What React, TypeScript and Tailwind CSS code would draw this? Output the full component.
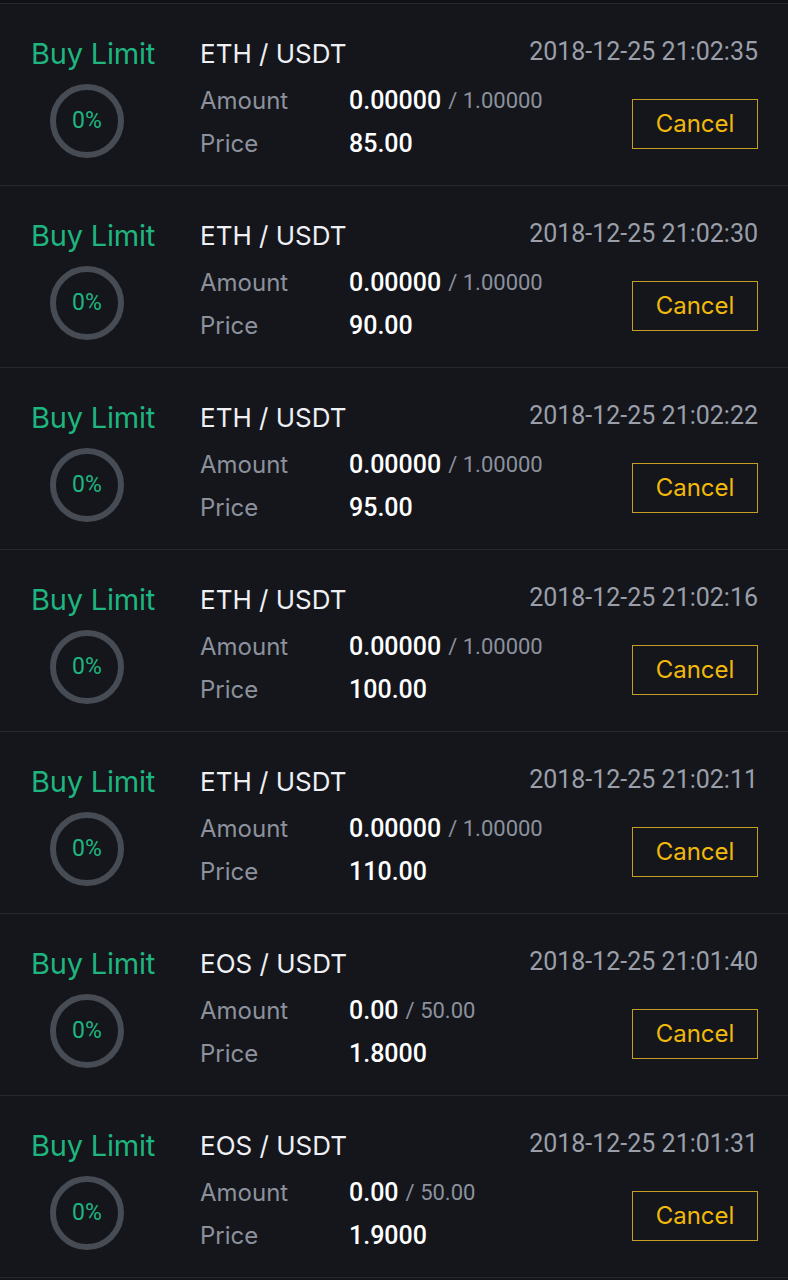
import React from "react";

type Order = {
  pair: string;
  time: string;
  filled: string;
  total: string;
  price: string;
};

const orders: Order[] = [
  { pair: "ETH / USDT", time: "2018-12-25 21:02:35", filled: "0.00000", total: "1.00000", price: "85.00" },
  { pair: "ETH / USDT", time: "2018-12-25 21:02:30", filled: "0.00000", total: "1.00000", price: "90.00" },
  { pair: "ETH / USDT", time: "2018-12-25 21:02:22", filled: "0.00000", total: "1.00000", price: "95.00" },
  { pair: "ETH / USDT", time: "2018-12-25 21:02:16", filled: "0.00000", total: "1.00000", price: "100.00" },
  { pair: "ETH / USDT", time: "2018-12-25 21:02:11", filled: "0.00000", total: "1.00000", price: "110.00" },
  { pair: "EOS / USDT", time: "2018-12-25 21:01:40", filled: "0.00", total: "50.00", price: "1.8000" },
  { pair: "EOS / USDT", time: "2018-12-25 21:01:31", filled: "0.00", total: "50.00", price: "1.9000" },
];

const Ring = () => (
  <div className="relative w-[74px] h-[74px] ml-[19px] mt-[14px]">
    <svg width="74" height="74" viewBox="0 0 74 74">
      <circle cx="37" cy="37" r="34" fill="none" stroke="#474b53" strokeWidth="6" />
    </svg>
    <span className="absolute inset-0 flex items-center justify-center text-[23px] text-[#1fb57f] font-['Roboto',sans-serif]">
      0%
    </span>
  </div>
);

const Row = ({ o }: { o: Order }) => (
  <div className="flex h-[182px] border-b border-[#262931] whitespace-nowrap">
    <div className="w-[200px] shrink-0 pl-[31px] pt-[34px] flex flex-col">
      <span className="text-[29px] leading-[32px] text-[#1fb57f] font-['Inter',sans-serif] tracking-[-0.2px]">
        Buy Limit
      </span>
      <Ring />
    </div>
    <div className="flex-1 min-w-0 pt-[34px] flex flex-col">
      <span className="text-[26px] leading-[32px] text-[#eef0f3] font-['Inter',sans-serif]">{o.pair}</span>
      <div className="mt-[9px] h-[43px] flex items-center">
        <span className="w-[149px] shrink-0 text-[24px] text-[#8c919c] font-['Inter',sans-serif]">Amount</span>
        <span className="text-[25px] text-white font-medium font-['Roboto',sans-serif]">{o.filled}</span>
        <span className="ml-[7px] text-[22px] text-[#8c919c] font-['Roboto',sans-serif]">/ {o.total}</span>
      </div>
      <div className="h-[43px] flex items-center">
        <span className="w-[149px] shrink-0 text-[24px] text-[#8c919c] font-['Inter',sans-serif]">Price</span>
        <span className="text-[25px] text-white font-medium font-['Roboto',sans-serif]">{o.price}</span>
      </div>
    </div>
    <div className="w-[260px] shrink-0 pr-[30px] pt-[33px] flex flex-col items-end">
      <span className="text-[25px] leading-[30px] text-[#9a9fa9] font-['Roboto',sans-serif]">{o.time}</span>
      <button className="mt-[32px] w-[126px] h-[50px] border border-[#c59d22] text-[24px] text-[#f0b90b] font-['Inter',sans-serif]">
        Cancel
      </button>
    </div>
  </div>
);

export default function App() {
  return (
    <div className="w-[788px] h-[1280px] bg-[#14161c] overflow-hidden">
      <div className="h-[3px] bg-[#0f1115]" />
      <div className="border-t border-[#262931]">
        {orders.map((o, i) => (
          <Row key={i} o={o} />
        ))}
      </div>
    </div>
  );
}
